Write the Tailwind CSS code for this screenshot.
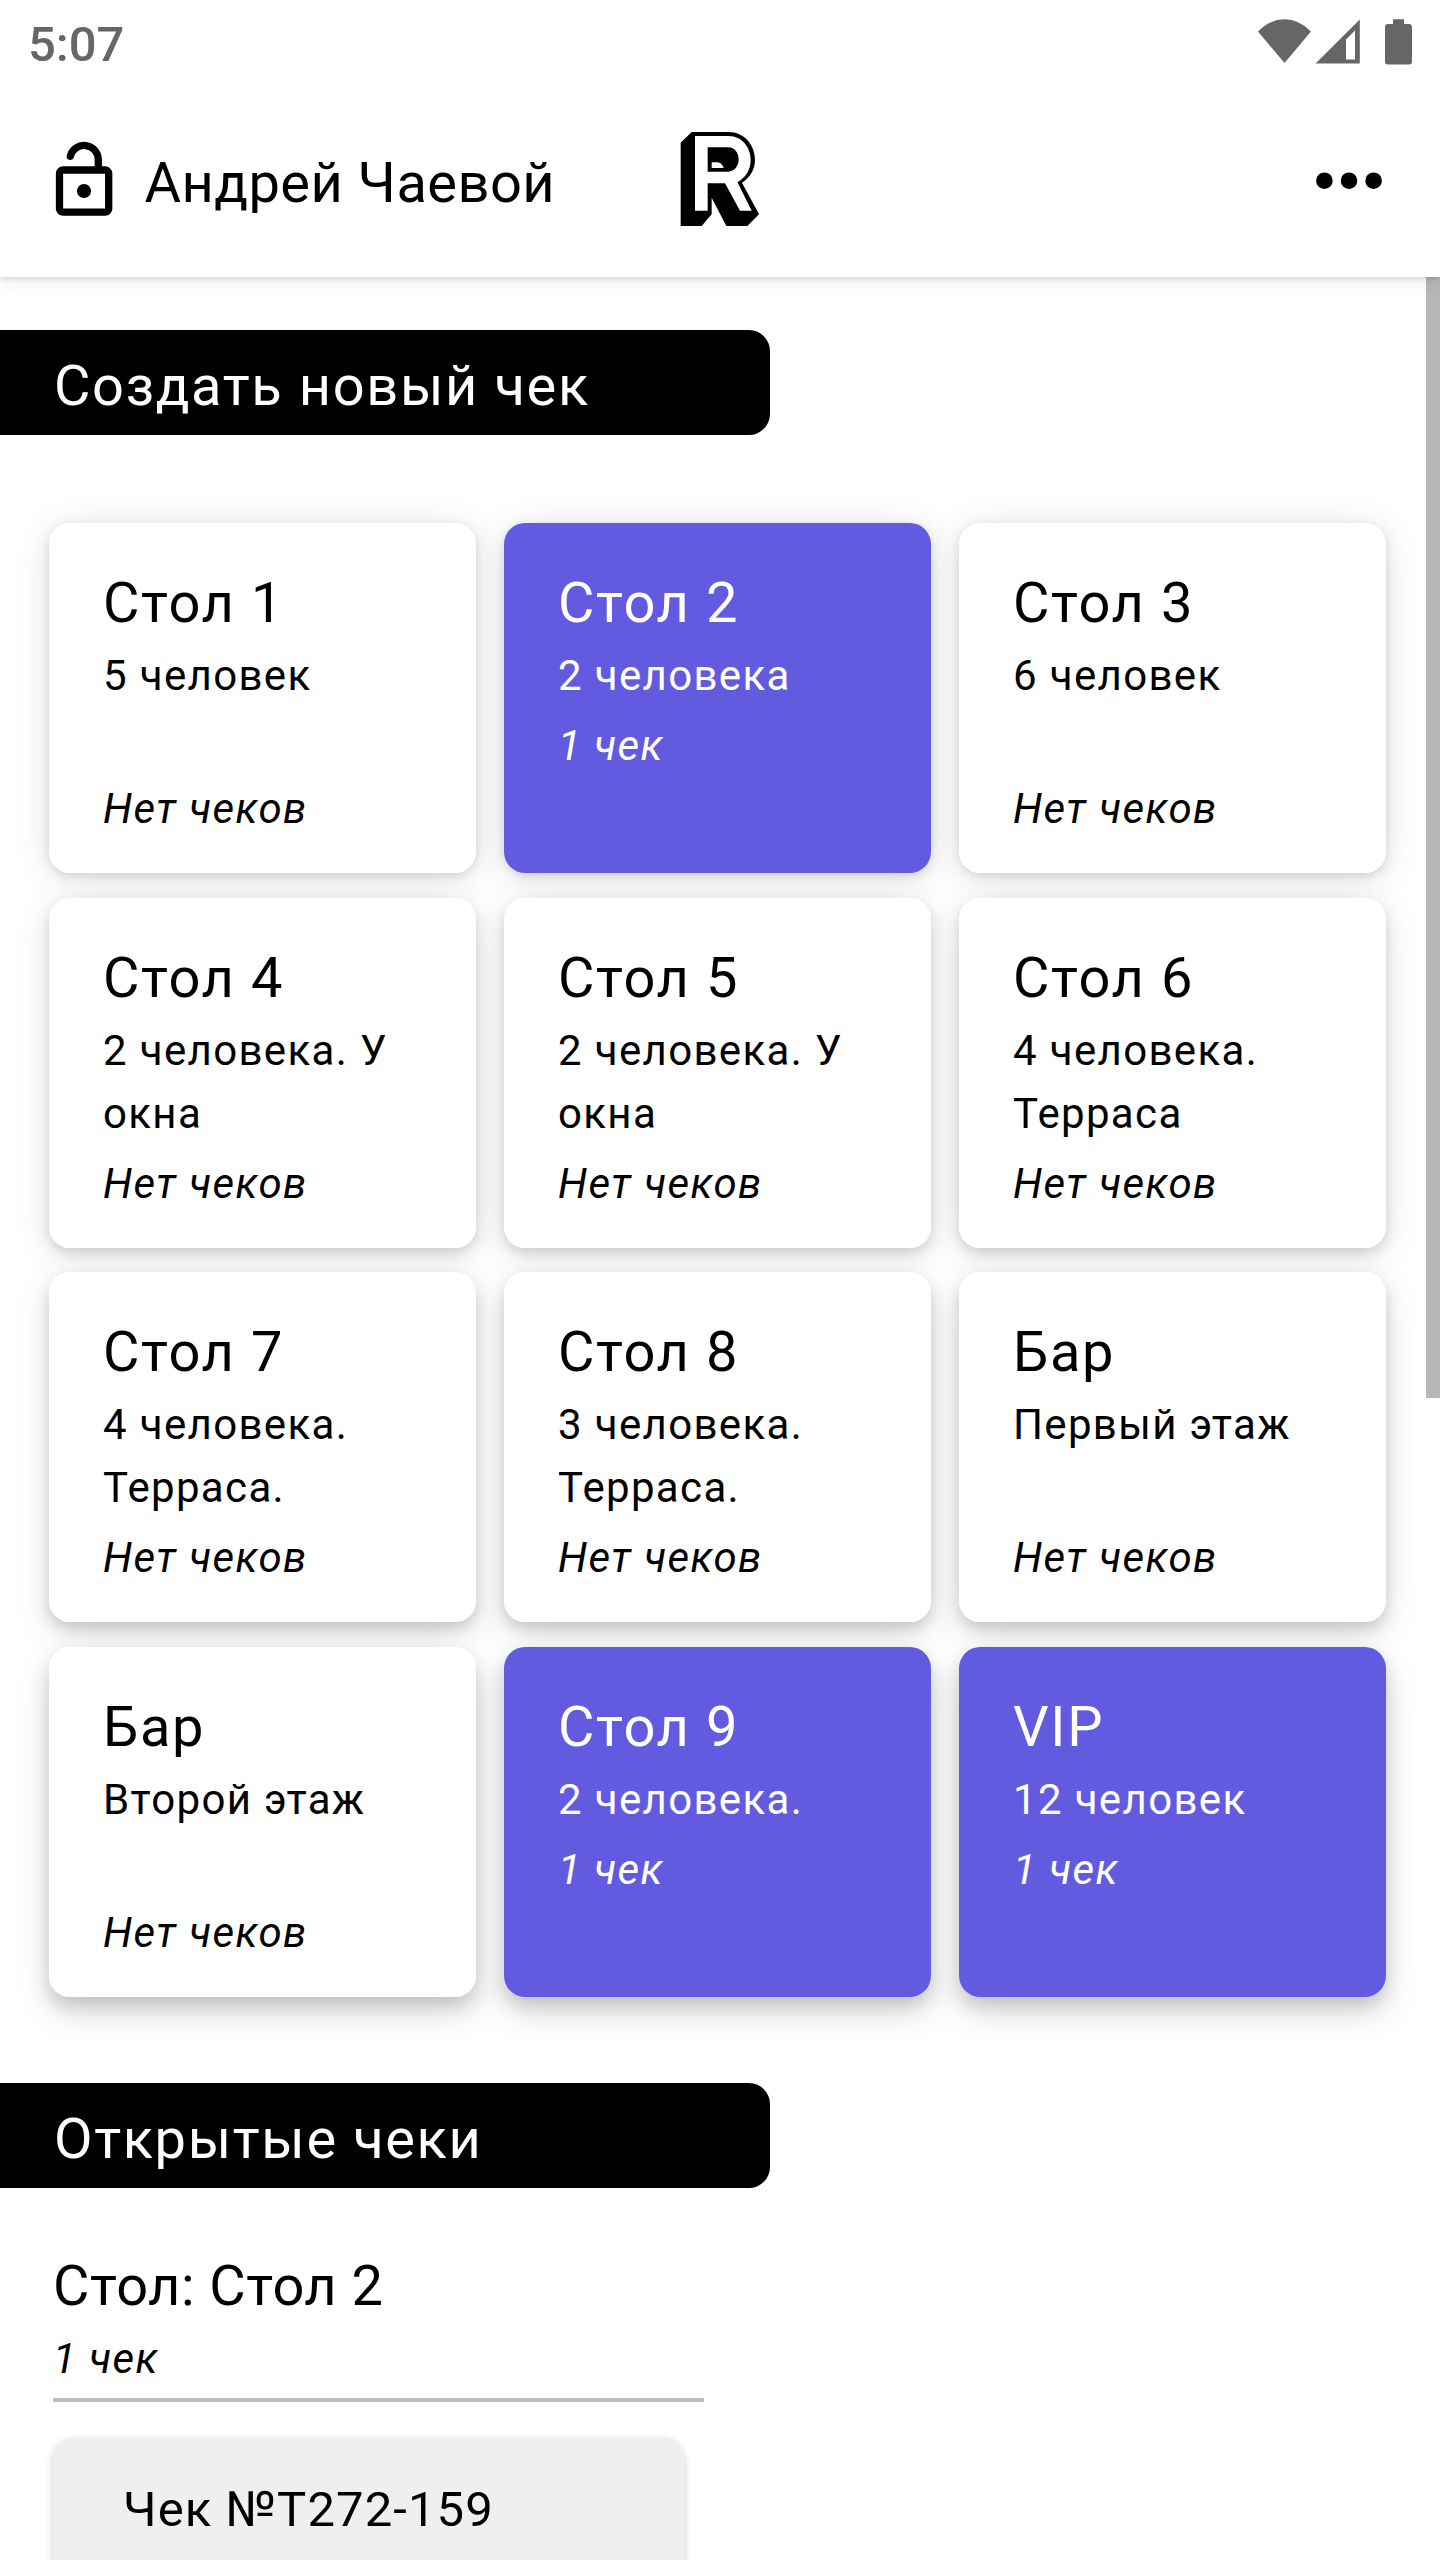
<!DOCTYPE html>
<html lang="ru">
<head>
<meta charset="utf-8">
<title>Чеки</title>
<script src="https://cdn.jsdelivr.net/npm/@tailwindcss/browser@4"></script>
</head>
<body class="bg-white">
<div class="w-[1440px] h-[2560px] overflow-hidden flex flex-col bg-white text-black font-[Roboto,sans-serif]">

  <!-- Status bar -->
  <div class="relative z-20 bg-white h-[84px] shrink-0 flex items-center justify-between pl-7 pr-7 text-[#666]">
    <span class="text-[49px] leading-[84px] h-[78px] font-medium">5:07</span>
    <svg class="w-[156px] h-[84px]" viewBox="1256 0 156 84" fill="currentColor">
      <path d="M1258 31.5Q1270 19.3 1284.5 19.3T1311 31.5L1284.5 63z"/>
      <path fill-rule="evenodd" d="M1315.5 63.5L1359.8 19.5V63.5zM1346 39.5V59.5H1355V30.5z"/>
      <path d="M1393 19.3h11V24h5a3 3 0 0 1 3 3v34.5a3 3 0 0 1-3 3h-21a3 3 0 0 1-3-3V27a3 3 0 0 1 3-3h5z"/>
    </svg>
  </div>

  <!-- App bar -->
  <header class="relative z-10 h-[193px] shrink-0 grid grid-cols-[1fr_120px_1fr] items-center bg-white shadow-[0_2px_5px_rgba(0,0,0,0.12),0_6px_14px_rgba(0,0,0,0.06)]">
    <div class="flex items-center pl-[50px]">
      <svg class="w-[68px] h-[84px]" viewBox="50 138.5 68 84" fill="none" stroke="#000" stroke-width="7.3">
        <rect x="59.5" y="169.5" width="49.2" height="42.2" rx="3.5"/>
        <path stroke-linecap="round" d="M70.3 155.8A14.2 14.2 0 0 1 98.3 159V169"/>
        <circle cx="84" cy="190.5" r="7.1" fill="#000" stroke="none"/>
      </svg>
      <h1 class="ml-[26.5px] pt-[5px] text-[56px] leading-[84px] tracking-[0.45px] whitespace-nowrap">Андрей Чаевой</h1>
    </div>
    <svg class="w-[120px] h-[141px]" viewBox="0 0 360 423">
      <path fill="#000" d="M62 98L95 66H206C252 66 285 104 285 150C285 178 270 203 246 218L297 313L262 348H199L155 263V313L125 348H62z"/>
      <path fill="#fff" fill-rule="evenodd" d="M105 78H206C246 78 272 112 272 149C272 180 256 204 232 216L275 302H240L195 220H143V302H105zM143 112V185H205C223 185 236 168 236 148C236 128 223 112 205 112z"/>
      <path fill="#fff" d="M155 157H170C181 157 188 164 191 174H155z"/>
    </svg>
    <svg class="w-[66px] h-[18px] justify-self-end mr-[58px]" viewBox="1316 171.5 66 18" fill="#000">
      <circle cx="1324.4" cy="180.2" r="8.3"/><circle cx="1349" cy="180.2" r="8.3"/><circle cx="1373.6" cy="180.2" r="8.3"/>
    </svg>
  </header>

  <div class="grow min-h-0 flex items-start">
  <main class="w-[1426px]">
    <h2 class="mt-[53px] w-[770px] h-[105px] bg-black text-white rounded-r-[21px] pl-[54px] pt-1 text-[56px] leading-[105px] tracking-[1.62px]">Создать новый чек</h2>

    <section id="tables" class="isolate mt-[88px] ml-[49px] grid grid-cols-[427px_427px_427px] auto-rows-[350px] gap-x-7 gap-y-[24.5px]"></section>

    <h2 class="mt-[86.5px] w-[770px] h-[105px] bg-black text-white rounded-r-[21px] pl-[54px] pt-1 text-[56px] leading-[105px] tracking-[1.62px]">Открытые чеки</h2>

    <section class="ml-[53px] mt-[57px]">
      <div class="w-[651px] pb-2 border-b-4 border-[#bdbdbd]">
        <h3 class="text-[56px] leading-[83px] -mb-px tracking-[0.45px]">Стол: Стол 2</h3>
        <p class="text-[42px] leading-[63px] tracking-[1.4px] italic">1 чек</p>
      </div>
      <article class="mt-[35px] w-[631px] h-[350px] rounded-[21px] bg-[#efefef] pl-[70px] pt-[38px] shadow-[0_4px_8px_rgba(0,0,0,0.2)]">
        <h4 class="text-[49px] leading-[70px] tracking-[1.1px]">Чек №T272-159</h4>
      </article>
    </section>
  </main>
  <div class="w-3.5 h-[1121px] bg-[#b6b6b6]"></div>
  </div>
</div>

<script>
const tables = [
  ['Стол 1', '5 человек', 0], ['Стол 2', '2 человека', 1], ['Стол 3', '6 человек', 0],
  ['Стол 4', '2 человека. У окна', 0], ['Стол 5', '2 человека. У окна', 0], ['Стол 6', '4 человека. Терраса', 0],
  ['Стол 7', '4 человека. Терраса.', 0], ['Стол 8', '3 человека. Терраса.', 0], ['Бар', 'Первый этаж', 0],
  ['Бар', 'Второй этаж', 0], ['Стол 9', '2 человека.', 1], ['VIP', '12 человек', 1],
];
// The shadow grows longer toward the bottom of the screen; it is kept under all cards.
const shadows = [
  'before:shadow-[0_3px_10px_rgba(0,0,0,0.12),0_4px_36px_rgba(0,0,0,0.12)]',
  'before:shadow-[0_5px_12px_rgba(0,0,0,0.13),0_7px_36px_rgba(0,0,0,0.12)]',
  'before:shadow-[0_7px_14px_rgba(0,0,0,0.14),0_11px_36px_rgba(0,0,0,0.13)]',
  'before:shadow-[0_9px_17px_rgba(0,0,0,0.14),0_15px_36px_rgba(0,0,0,0.14)]',
];
document.getElementById('tables').innerHTML = tables.map(([name, info, open], i) => `
  <article class="relative rounded-[21px] pl-[54px] pr-[50px] pt-[39px] before:absolute before:inset-0 before:-z-10 before:rounded-[21px] ${shadows[Math.floor(i / 3)]} ${open ? 'bg-[#635bdf] text-white' : 'bg-white'}">
    <h3 class="-mb-px text-[56px] leading-[83px] tracking-[1.62px]">${name}</h3>
    <p class="text-[42px] leading-[63px] tracking-[1.35px] ${open ? '' : 'h-[126px]'}">${info}</p>
    <p class="mt-[7px] text-[42px] leading-[63px] tracking-[1.4px] italic">${open ? '1 чек' : 'Нет чеков'}</p>
  </article>`).join('');
</script>
</body>
</html>
